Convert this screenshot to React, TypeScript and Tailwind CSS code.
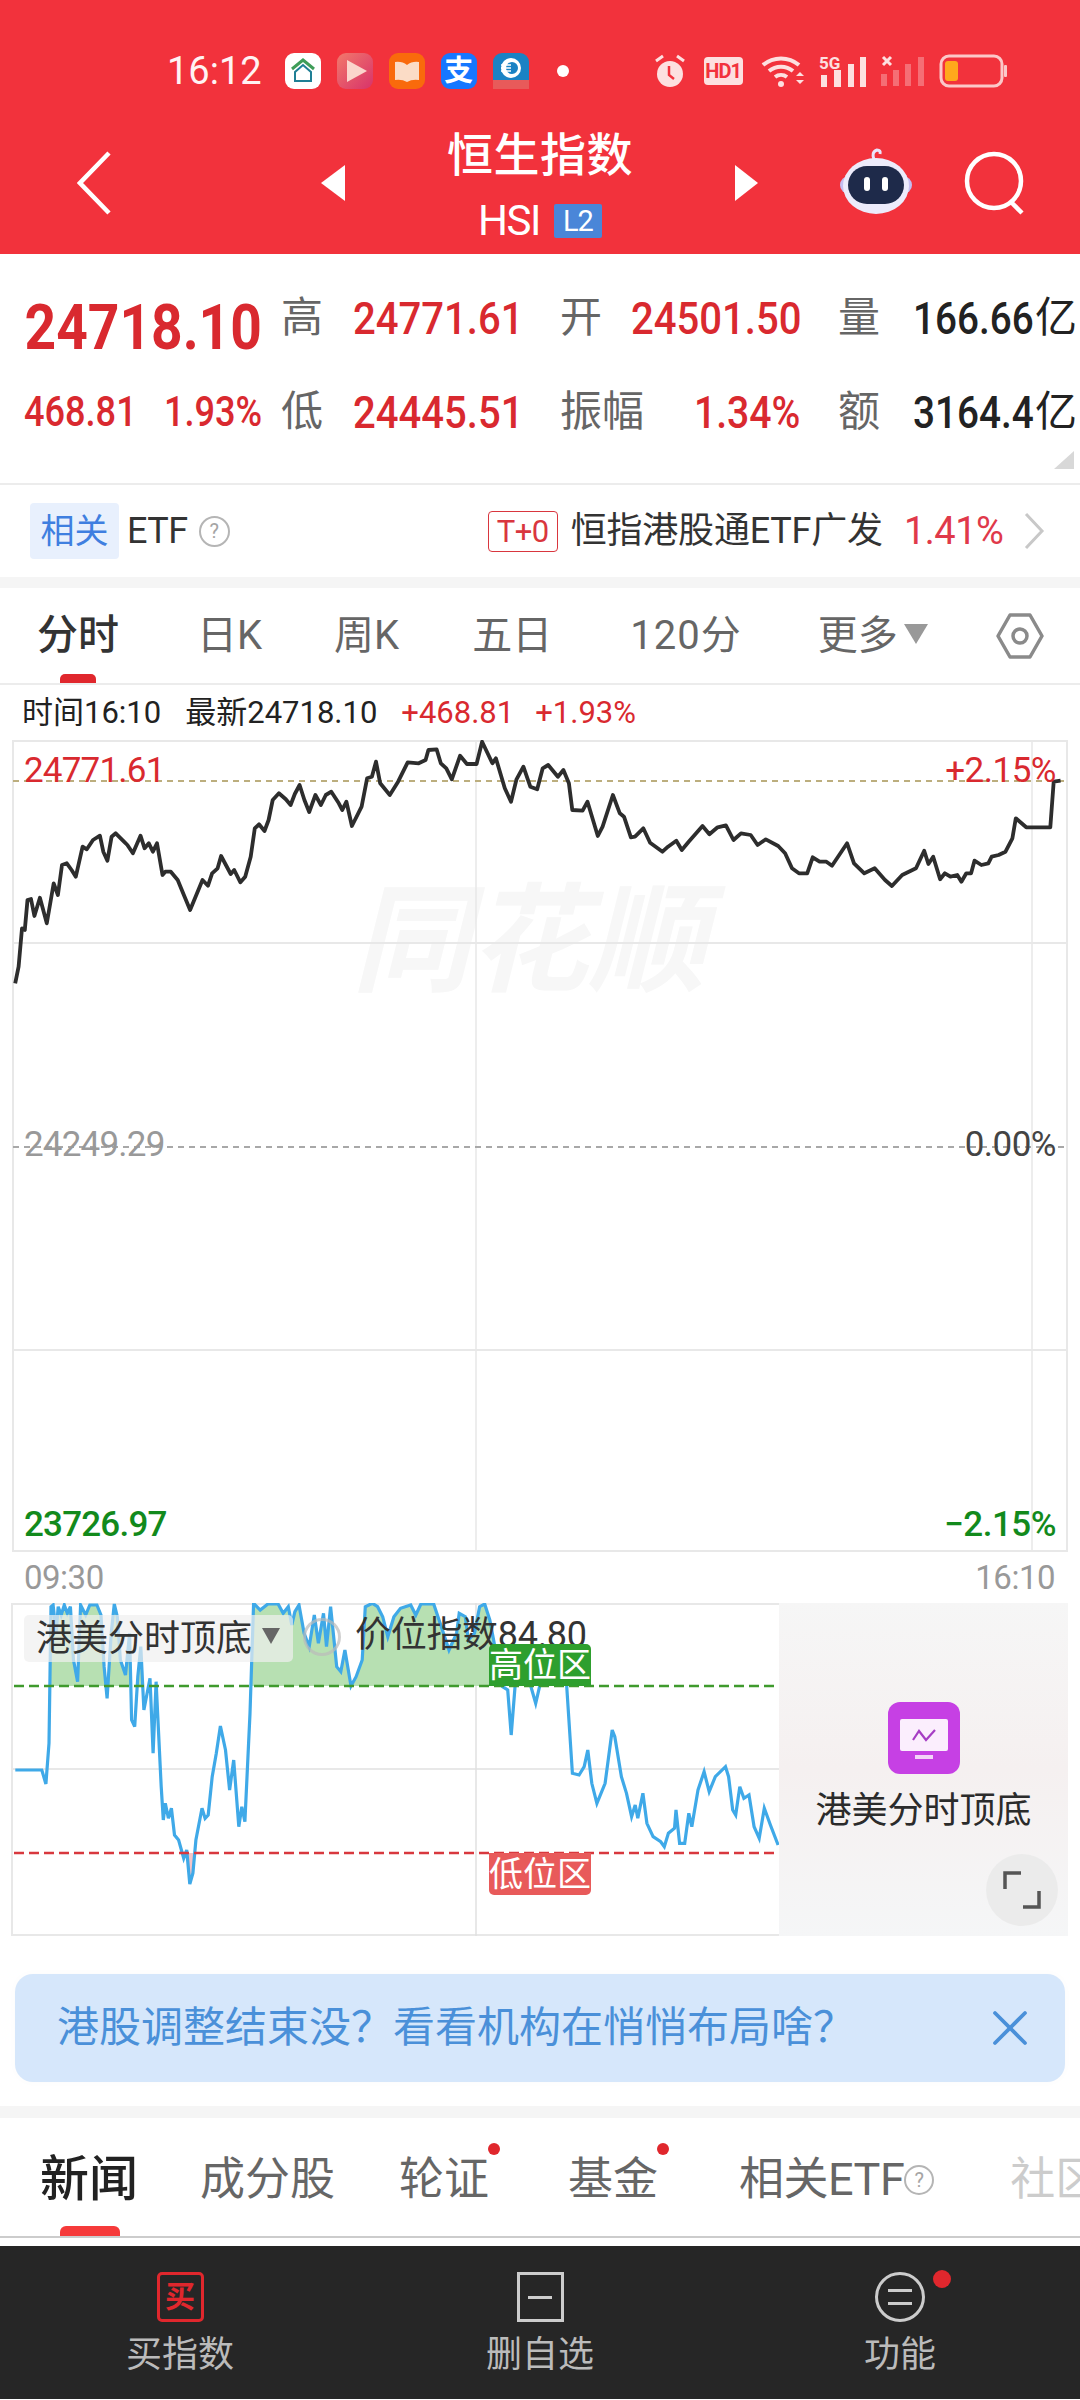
import { X } from "lucide-react"

const priceLine =
  "22,790 27,740 32,625 36,630 40,540 45,537 50,588 58,533 68,610 78,490 84,525 90,435 97,430 104,450 110,470 120,380 126,388 135,360 145,347 150,395 156,422 162,350 168,340 180,365 185,375 193,400 204,347 210,385 216,370 222,395 228,370 236,465 240,455 248,455 258,480 268,530 276,570 285,525 294,480 302,497 308,460 316,445 321,408 328,435 335,462 340,450 349,487 356,470 364,410 370,325 376,313 384,333 390,300 396,240 405,220 415,238 422,255 428,222 435,195 442,240 449,276 458,225 466,255 473,225 481,215 492,250 497,270 503,245 511,318 525,260 533,175 540,170 546,125 552,190 566,225 578,185 584,160 592,127 608,130 618,120 622,90 634,88 640,130 648,145 656,178 668,107 678,132 692,132 700,65 715,130 720,115 733,205 742,245 750,178 760,140 770,200 780,208 788,145 796,135 810,170 818,150 826,190 831,270 846,272 853,245 868,348 875,320 890,225 900,280 906,290 916,352 922,350 934,325 944,368 962,395 970,380 982,362 990,390 1000,365 1020,318 1030,343 1042,322 1054,316 1065,360 1076,340 1090,345 1100,375 1112,358 1130,378 1140,400 1150,445 1160,460 1172,460 1180,412 1190,425 1200,425 1208,437 1230,370 1240,430 1255,460 1270,445 1285,480 1295,498 1310,465 1330,445 1342,392 1348,432 1355,410 1365,478 1372,460 1380,470 1390,465 1396,485 1403,460 1410,460 1415,422 1425,435 1435,430 1440,410 1450,405 1460,395 1470,355 1475,295 1490,322 1525,322 1530,185 1540,182"

const indicatorLine =
  "30,810 82,810 90,852 96,730 100,320 104,315 110,400 114,320 120,345 126,315 132,340 138,320 144,480 152,545 158,315 168,345 176,315 190,315 198,345 204,500 210,595 218,400 224,312 230,350 236,480 246,525 254,400 258,660 264,680 270,530 276,440 282,630 294,535 300,760 306,545 316,860 320,960 324,910 330,955 336,925 342,1005 350,1020 360,1075 366,1050 372,1152 378,1120 384,1020 396,925 402,955 408,945 416,830 424,760 432,678 442,750 450,870 458,780 468,980 474,920 480,965 490,640 497,310 510,330 525,312 545,312 555,340 565,320 572,375 578,335 586,315 596,400 606,440 616,345 624,430 634,340 640,440 648,320 660,500 668,515 676,450 688,558 698,530 710,480 716,320 730,310 740,320 750,350 760,410 772,350 785,325 805,315 815,345 825,312 850,312 865,380 880,450 895,400 900,340 912,350 918,420 930,400 940,320 950,312 960,360 975,480 985,560 995,570 1002,705 1010,550 1020,480 1035,530 1050,610 1065,510 1085,470 1100,500 1110,540 1122,820 1135,825 1145,800 1152,750 1160,850 1170,910 1186,850 1200,690 1205,710 1218,830 1228,880 1238,950 1245,915 1250,955 1260,880 1268,970 1280,1010 1295,1025 1302,1040 1310,1000 1322,985 1325,930 1332,1030 1342,1030 1350,940 1356,980 1368,870 1380,815 1390,875 1402,830 1422,800 1428,830 1436,930 1442,945 1450,860 1458,895 1468,885 1478,980 1488,1015 1498,925 1510,975 1525,1035"

// points were read off the crops, so rescale into each chart's own box
function scalePoints(raw: string, sx: number, sy: number, oy: number) {
  return raw
    .split(" ")
    .map((p) => {
      const [x, y] = p.split(",").map(Number)
      return `${(x / sx).toFixed(1)},${(y / sy + oy).toFixed(1)}`
    })
    .join(" ")
}

function HelpDot({ className }: { className: string }) {
  return (
    <span className={`flex shrink-0 items-center justify-center rounded-full border-2 border-[#b5b5b5] text-[#a5a5a5] ${className}`}>?</span>
  )
}

function StatusIcons() {
  return (
    <div className="flex items-center">
      <svg width="34" height="36" viewBox="0 0 34 36" className="ml-[84px]">
        <circle cx="17" cy="21" r="13" fill="#fde0e0" />
        <path d="M16 13v9l5 4" stroke="#f2323c" strokeWidth="2.5" fill="none" />
        <path d="M3 8l7-5M31 8l-7-5" stroke="#fde0e0" strokeWidth="3" />
      </svg>
      <span className="ml-[17px] flex h-[28px] w-[39px] items-center justify-center rounded-[4px] bg-[#fde0e0] text-[20px] font-bold leading-none tracking-[-1px] text-[#f2323c]">HD1</span>
      <svg width="46" height="34" viewBox="0 0 46 34" className="ml-[18px]">
        <path d="M2 11a28 28 0 0 1 36 0M8 17a19 19 0 0 1 24 0M14 23a10 10 0 0 1 12 0" stroke="#fde0e0" strokeWidth="4" fill="none" />
        <circle cx="20" cy="30" r="3" fill="#fde0e0" />
        <path d="M35 22l4-4 4 4zM35 26l4 4 4-4z" fill="#fde0e0" />
      </svg>
      <svg width="48" height="34" viewBox="0 0 48 34" className="ml-[12px] overflow-visible">
        <text x="0" y="15" fill="#fde0e0" fontSize="17" fontWeight="700" fontFamily="Roboto">5G</text>
        <path d="M2 21h6v12H2zM15 16h7v17h-7zM29 10h6v23h-6zM41 3h6v30h-6z" fill="#fde0e0" />
      </svg>
      <svg width="44" height="32" viewBox="0 0 44 32" className="ml-[14px]">
        <path d="M2 2l8 8M10 2l-8 8" stroke="#fde0e0" strokeWidth="3" />
        <path d="M0 19h6v12H0zM12 15h6v16h-6zM24 9h6v22h-6zM37 2h6v29h-6z" fill="#fde0e0" opacity="0.35" />
      </svg>
      <svg width="68" height="34" viewBox="0 0 68 34" className="ml-[14px]">
        <rect x="2" y="2" width="61" height="30" rx="8" fill="none" stroke="#fbc8c8" strokeWidth="3" />
        <rect x="6" y="7" width="13" height="20" rx="3" fill="#ffa81c" />
        <rect x="65" y="11" width="3" height="12" rx="1" fill="#fbc8c8" />
      </svg>
    </div>
  )
}

function AppIcons() {
  return (
    <div className="ml-[23px] flex items-center gap-[16px]">
      <svg width="36" height="36" viewBox="0 0 36 36">
        <rect width="36" height="36" rx="9" fill="#fff" />
        <path d="M7 16l11-9 11 9" stroke="#3f9d58" strokeWidth="3" fill="none" />
        <path d="M10 19v9h16v-9l-8-7z" stroke="#1f7f95" strokeWidth="2" fill="none" />
      </svg>
      <svg width="36" height="36" viewBox="0 0 36 36">
        <defs>
          <linearGradient id="playBg" x1="0" y1="0" x2="1" y2="1">
            <stop offset="0" stopColor="#f2796b" />
            <stop offset="1" stopColor="#d8326a" />
          </linearGradient>
        </defs>
        <rect width="36" height="36" rx="9" fill="url(#playBg)" />
        <path d="M10 7l20 11-20 11z" fill="#fbd5cc" />
      </svg>
      <svg width="36" height="36" viewBox="0 0 36 36">
        <rect width="36" height="36" rx="9" fill="#f96a0c" />
        <path d="M6 9q7-1 12 3q5-4 12-3v18q-7-1-12 2q-5-3-12-2z" fill="#fbdcc6" />
      </svg>
      <span className="flex h-[36px] w-[36px] items-center justify-center rounded-[9px] bg-[#1677ff] text-[29px] font-bold leading-none text-white">支</span>
      <svg width="36" height="36" viewBox="0 0 36 36">
        <rect width="36" height="36" rx="9" fill="#1a82c4" />
        <circle cx="18" cy="15" r="10" fill="#fff" />
        <circle cx="19" cy="15" r="6" fill="#1a82c4" />
        <path d="M8 12h10M8 15h10M8 18h10" stroke="#fff" strokeWidth="1.5" />
        <rect y="27" width="36" height="9" fill="#e85a5a" />
      </svg>
      <span className="ml-[12px] h-[12px] w-[12px] rounded-full bg-white" />
    </div>
  )
}

function Header() {
  return (
    <header className="h-[254px] bg-[#f2323c] pt-[53px] text-white">
      <div className="flex h-[36px] items-center pl-[167px]">
        <span className="text-[38px] leading-none text-[#fff3f3]">16:12</span>
        <AppIcons />
        <StatusIcons />
      </div>
      <div className="mt-[41px] flex h-[110px] items-center pl-[77px]">
        <svg width="34" height="64" viewBox="0 0 34 64" className="mt-[-4px]">
          <path d="M32 2L3 32l29 30" fill="none" stroke="#fff" strokeWidth="4.5" />
        </svg>
        <svg width="24" height="36" viewBox="0 0 24 36" className="ml-[210px] mt-[-4px]">
          <path d="M24 0v36L0 18z" fill="#fff" />
        </svg>
        <div className="flex w-[390px] flex-col items-center">
          <span className="text-[46px] font-medium leading-[46px] tracking-[0.5px]">恒生指数</span>
          <div className="mt-[26px] flex items-center">
            <span className="text-[42px] leading-[34px] tracking-[-1.5px]">HSI</span>
            <span className="ml-[14px] flex h-[34px] w-[48px] items-center justify-center rounded-[2px] bg-[#4a86d8] text-[29px] leading-none tracking-[-1px]">L2</span>
          </div>
        </div>
        <svg width="23" height="36" viewBox="0 0 23 36" className="mt-[-4px]">
          <path d="M0 0v36l23-18z" fill="#fff" />
        </svg>
        <svg width="72" height="68" viewBox="0 0 72 68" className="ml-[82px] mt-[-10px]">
          <path d="M34 14q-3-8 3-10q4 0 3 4" fill="none" stroke="#e9e4fb" strokeWidth="3" />
          <rect x="0" y="30" width="72" height="18" rx="9" fill="#c4bdf0" />
          <ellipse cx="36" cy="40" rx="33" ry="28" fill="#ecebfb" />
          <rect x="8" y="20" width="56" height="38" rx="19" fill="#1e2a4a" />
          <rect x="24" y="31" width="6" height="14" rx="3" fill="#fff" />
          <rect x="42" y="31" width="6" height="14" rx="3" fill="#fff" />
        </svg>
        <svg width="62" height="64" viewBox="0 0 62 64" className="ml-[52px] mt-[-4px]">
          <ellipse cx="30" cy="30" rx="27" ry="27" fill="none" stroke="#fff" strokeWidth="4.5" />
          <path d="M47 51l11 11" stroke="#fff" strokeWidth="4.5" />
        </svg>
      </div>
    </header>
  )
}

function Stats() {
  const label = "text-[42px] leading-none text-[#666]"
  const red = "ml-[-1px] inline-block origin-left scale-x-[0.89] text-[45px] font-medium leading-none text-[#d9292f]"
  const dark = "inline-block shrink-0 origin-left scale-x-[0.86] text-[45px] font-medium leading-none text-[#222]"
  const row = "grid grid-cols-[281px_73px_206px_72px_206px_75px_167px] grid-rows-[46px] items-center whitespace-nowrap"
  return (
    <section className="relative h-[231px] border-b-2 border-[#ececec] pt-[41px]">
      <div className={row}>
        <span className="mt-[18px] inline-block origin-left scale-x-[0.875] pl-[28px] text-[63px] font-bold leading-none text-[#d9292f]">24718.10</span>
        <span className={label}>高</span>
        <span className={red}>24771.61</span>
        <span className={label}>开</span>
        <span className={red}>24501.50</span>
        <span className={label}>量</span>
        <span className="flex items-center">
          <span className={`${dark} w-[122px]`}>166.66</span>
          <span className="text-[42px] leading-none text-[#222]">亿</span>
        </span>
      </div>
      <div className={`${row} mt-[48px]`}>
        <span className="flex pl-[24px] text-[42px] font-medium leading-none text-[#d9292f]">
          <span className="w-[140px] origin-left scale-x-[0.86]">468.81</span>
          <span className="origin-left scale-x-[0.86]">1.93%</span>
        </span>
        <span className={label}>低</span>
        <span className={red}>24445.51</span>
        <span className="col-span-2 flex items-center justify-between pr-[38px]">
          <span className={label}>振幅</span>
          <span className="inline-block origin-right scale-x-[0.87] text-[45px] font-medium leading-none text-[#d9292f]">1.34%</span>
        </span>
        <span className={label}>额</span>
        <span className="flex items-center">
          <span className={`${dark} w-[122px]`}>3164.4</span>
          <span className="text-[42px] leading-none text-[#222]">亿</span>
        </span>
      </div>
      <svg width="20" height="18" viewBox="0 0 20 18" className="absolute bottom-[14px] right-[6px]">
        <path d="M20 0v18H0z" fill="#d8d8d8" />
      </svg>
    </section>
  )
}

function EtfRow() {
  return (
    <section className="flex h-[103px] items-center whitespace-nowrap border-b-[11px] border-[#f5f5f5] pl-[30px]">
      <span className="flex h-[56px] w-[89px] items-center justify-center rounded-[4px] bg-[#e8f0fd] text-[34px] leading-none text-[#3f7fe0]">相关</span>
      <span className="ml-[8px] text-[36px] leading-none tracking-[-0.5px] text-[#333]">ETF</span>
      <HelpDot className="ml-[11px] h-[31px] w-[31px] text-[20px] leading-none" />
      <span className="ml-[258px] flex h-[41px] w-[70px] items-center justify-center rounded-[4px] border border-[#d9363e] text-[31px] leading-none tracking-[-0.5px] text-[#d9363e]">T+0</span>
      <span className="ml-[13px] text-[36px] leading-none tracking-[-0.2px] text-[#333]">恒指港股通ETF广发</span>
      <span className="ml-[21px] text-[38px] leading-none tracking-[-0.5px] text-[#e0394a]">1.41%</span>
      <svg width="22" height="38" viewBox="0 0 22 38" className="ml-[20px]">
        <path d="M3 2l16 17L3 36" fill="none" stroke="#c8c8c8" strokeWidth="3" />
      </svg>
    </section>
  )
}

function PeriodTabs() {
  const tab = "text-[40px] leading-none text-[#666]"
  return (
    <section className="relative flex h-[97px] items-center whitespace-nowrap border-b-2 border-[#ececec] pl-[37px]">
      <span className="text-[41px] font-medium leading-none text-[#333]">分时</span>
      <span className={`${tab} ml-[78px]`}>日K</span>
      <span className={`${tab} ml-[72px]`}>周K</span>
      <span className={`${tab} ml-[73px]`}>五日</span>
      <span className={`${tab} ml-[78px] tracking-[1px]`}>120分</span>
      <span className={`${tab} ml-[76px]`}>更多</span>
      <svg width="24" height="20" viewBox="0 0 24 20" className="ml-[6px] mt-[-4px]">
        <path d="M0 0h24L12 20z" fill="#999" />
      </svg>
      <svg width="48" height="48" viewBox="0 0 48 48" className="ml-[68px]">
        <path d="M14 3h20l12 21-12 21H14L2 24z" fill="none" stroke="#8a8a8a" strokeWidth="3.5" strokeLinejoin="round" />
        <circle cx="24" cy="24" r="7" fill="none" stroke="#8a8a8a" strokeWidth="3.5" />
      </svg>
      <span className="absolute bottom-0 left-[60px] h-[9px] w-[36px] rounded-t-[5px] bg-[#e0272d]" />
    </section>
  )
}

function InfoRow() {
  return (
    <div className="flex h-[55px] items-center whitespace-nowrap pl-[22px] text-[31px] leading-none text-[#222]">
      <span>时间16:10</span>
      <span className="ml-[24px]">最新24718.10</span>
      <span className="ml-[24px] text-[#d9292f]">+468.81</span>
      <span className="ml-[21px] text-[#d9292f]">+1.93%</span>
    </div>
  )
}

function PriceChart() {
  const pts = scalePoints(priceLine, 1.452, 3, -20)
  return (
    <section className="relative h-[812px] overflow-hidden whitespace-nowrap">
      <span className="absolute left-[352px] top-[143px] text-[118px] font-bold italic leading-none text-[#f7f7f7]">同花顺</span>
      <svg className="absolute inset-0" width="1080" height="812" viewBox="0 0 1080 812">
        <g stroke="#e8e8e8" strokeWidth="2" fill="none">
          <path d="M13 1h1054V811H13z" />
          <path d="M13 203h1054M13 610h1054" />
        </g>
        <path d="M476 0v812M1032 0v812" stroke="#e8e8e8" strokeWidth="1.5" />
        <path d="M13 41h1054" stroke="#bcae7e" strokeWidth="2" strokeDasharray="6 5" />
        <path d="M13 407h1054" stroke="#a8a8a8" strokeWidth="2" strokeDasharray="6 5" />
        <polyline points={pts} fill="none" stroke="#2d2d2d" strokeWidth="3.8" strokeLinejoin="round" />
      </svg>
      <span className="absolute left-[24px] top-[13px] text-[35px] leading-none tracking-[-0.8px] text-[#d9292f]">24771.61</span>
      <span className="absolute right-[24px] top-[13px] text-[35px] leading-none tracking-[-0.5px] text-[#d9292f]">+2.15%</span>
      <span className="absolute left-[24px] top-[387px] text-[35px] leading-none tracking-[-0.8px] text-[#999]">24249.29</span>
      <span className="absolute right-[24px] top-[387px] text-[35px] leading-none tracking-[-0.5px] text-[#444]">0.00%</span>
      <span className="absolute bottom-[10px] left-[24px] text-[35px] font-medium leading-none tracking-[-0.8px] text-[#128a1c]">23726.97</span>
      <span className="absolute bottom-[10px] right-[24px] text-[35px] font-medium leading-none tracking-[-0.5px] text-[#128a1c]">−2.15%</span>
    </section>
  )
}

function IndicatorChart() {
  const pts = scalePoints(indicatorLine, 1.96, 3, -103)
  return (
    <section className="relative mb-[38px] ml-[12px] flex h-[333px] w-[1056px] whitespace-nowrap">
      <div className="relative w-[767px]">
        <svg className="absolute left-[-12px] top-0" width="780" height="333" viewBox="0 0 780 333">
          <defs>
            <clipPath id="aboveHigh">
              <rect x="0" y="0" width="780" height="83" />
            </clipPath>
            <clipPath id="belowLow">
              <rect x="0" y="250" width="780" height="83" />
            </clipPath>
            <clipPath id="panel">
              <rect x="0" y="0" width="780" height="333" />
            </clipPath>
          </defs>
          <path d="M12 1h768M12 166h768M12 332h768M12 0v333" stroke="#e8e8e8" strokeWidth="2" fill="none" />
          <path d="M476 0v333" stroke="#e0e0e0" strokeWidth="1.5" />
          <polygon points={`0,83 ${pts} 780,83`} fill="#b7e0b2" clipPath="url(#aboveHigh)" />
          <polygon points={`0,250 ${pts} 780,250`} fill="#f5c4c8" clipPath="url(#belowLow)" />
          <polyline points={pts} fill="none" stroke="#3fa9e8" strokeWidth="3.2" clipPath="url(#panel)" />
          <path d="M14 83h762" stroke="#3f9a2d" strokeWidth="2.5" strokeDasharray="10 5" />
          <path d="M14 250h762" stroke="#d8383e" strokeWidth="2.5" strokeDasharray="10 5" />
        </svg>
        <div className="absolute left-[12px] top-[12px] flex h-[47px] w-[269px] items-center rounded-[5px] bg-[#efefef]/70 pl-[12px]">
          <span className="text-[36px] leading-none text-[#333]">港美分时顶底</span>
          <svg width="18" height="16" viewBox="0 0 18 16" className="ml-[10px] mt-[-6px]">
            <path d="M0 0h18L9 16z" fill="#666" />
          </svg>
        </div>
        <span className="absolute left-[291px] top-[15px] h-[38px] w-[38px] rounded-full border-[3px] border-[#bbb]/70" />
        <span className="absolute left-[343px] top-[14px] text-[36px] leading-none tracking-[-0.3px] text-[#333]">价位指数84.80</span>
        <span className="absolute left-[477px] top-[41px] flex h-[42px] w-[102px] items-center justify-center rounded-t-[5px] bg-[#2e9f2e] text-[34px] leading-none text-white">高位区</span>
        <span className="absolute left-[477px] top-[250px] flex h-[42px] w-[102px] items-center justify-center rounded-b-[5px] bg-[#e85a5a] text-[34px] leading-none text-white">低位区</span>
      </div>
      <div className="relative flex w-[289px] flex-col items-center bg-gradient-to-b from-[#f6f6f6] via-[#f5f0f0] to-[#f5f6f7] pt-[99px]">
        <svg width="72" height="72" viewBox="0 0 72 72">
          <rect width="72" height="72" rx="12" fill="#c640e4" />
          <rect x="12" y="17" width="48" height="32" rx="2" fill="#fbeefd" />
          <rect x="27" y="53" width="18" height="4" fill="#f3d4f8" />
          <path d="M25 38l6-9 7 9 9-10" fill="none" stroke="#a63ec4" strokeWidth="2.2" />
        </svg>
        <span className="mt-[19px] text-[36px] leading-none text-[#2b2b2b]">港美分时顶底</span>
        <span className="absolute bottom-[10px] right-[10px] flex h-[72px] w-[72px] items-center justify-center rounded-full bg-[#ebebeb]">
          <svg width="38" height="38" viewBox="0 0 38 38">
            <path d="M18 2H2v16M36 20v16H20" fill="none" stroke="#555" strokeWidth="3.5" />
          </svg>
        </span>
      </div>
    </section>
  )
}

function Banner() {
  return (
    <div className="mx-[15px] flex h-[108px] items-center rounded-[18px] bg-[#d6e7fb] pl-[42px] pr-[25px] shadow-[0_0_10px_rgba(0,0,0,0.02)]">
      <span className="flex-1 whitespace-nowrap text-[42px] leading-none text-[#4a90d9]">{"港股调整结束没\uFF1F看看机构在悄悄布局啥\uFF1F"}</span>
      <X className="h-[60px] w-[60px] text-[#4a90d9]" strokeWidth={1.5} />
    </div>
  )
}

function NewsTabs() {
  const tab = "text-[45px] leading-none text-[#666]"
  return (
    <section className="relative mt-[24px] flex h-[132px] items-center overflow-hidden whitespace-nowrap border-t-[12px] border-b-2 border-t-[#f5f5f5] border-b-[#ccc] pl-[40px] pt-[5px]">
      <span className="text-[49px] font-medium leading-none text-[#222]">新闻</span>
      <span className={`${tab} ml-[62px]`}>成分股</span>
      <span className={`${tab} relative ml-[64px]`}>
        轮证
        <span className="absolute right-[-11px] top-[-14px] h-[12px] w-[12px] rounded-full bg-[#e0272d]" />
      </span>
      <span className={`${tab} relative ml-[79px]`}>
        基金
        <span className="absolute right-[-11px] top-[-14px] h-[12px] w-[12px] rounded-full bg-[#e0272d]" />
      </span>
      <span className={`${tab} ml-[81px] tracking-[-0.5px]`}>相关ETF</span>
      <HelpDot className="h-[30px] w-[30px] text-[20px] leading-none" />
      <span className={`${tab} ml-[76px] text-[#ccc]`}>社区</span>
      <span className="absolute bottom-0 left-[60px] h-[10px] w-[60px] rounded-t-[6px] bg-[#f63a3a]" />
    </section>
  )
}

function BottomNav() {
  const label = "mt-[15px] text-[36px] leading-none text-[#bbb]"
  return (
    <nav className="mt-[8px] grid h-[153px] grid-cols-3 whitespace-nowrap bg-[#262626] pt-[26px]">
      <div className="flex flex-col items-center">
        <span className="flex h-[50px] w-[47px] items-center justify-center rounded-[5px] border-[3px] border-[#e0272d] text-[30px] font-bold leading-none text-[#e0272d]">买</span>
        <span className={label}>买指数</span>
      </div>
      <div className="flex flex-col items-center">
        <span className="flex h-[50px] w-[47px] items-center justify-center border-[3px] border-[#ccc]">
          <span className="h-[3px] w-[24px] bg-[#ccc]" />
        </span>
        <span className={label}>删自选</span>
      </div>
      <div className="relative flex flex-col items-center">
        <span className="flex h-[50px] w-[50px] flex-col items-center justify-center gap-[10px] rounded-full border-[3px] border-[#ccc]">
          <span className="h-[3px] w-[24px] bg-[#ccc]" />
          <span className="h-[3px] w-[24px] bg-[#ccc]" />
        </span>
        <span className={label}>功能</span>
        <span className="absolute left-[213px] top-[-2px] h-[18px] w-[18px] rounded-full bg-[#e0272d]" />
      </div>
    </nav>
  )
}

export default function App() {
  return (
    <div className="flex h-[2400px] w-[1080px] flex-col overflow-hidden bg-white [font-family:Roboto,'Noto_Sans_CJK_SC',sans-serif]">
      <Header />
      <Stats />
      <EtfRow />
      <PeriodTabs />
      <InfoRow />
      <PriceChart />
      <div className="flex h-[51px] items-center justify-between pl-[24px] pr-[25px] text-[33px] leading-none tracking-[-0.5px] text-[#999]">
        <span>09:30</span>
        <span>16:10</span>
      </div>
      <IndicatorChart />
      <Banner />
      <NewsTabs />
      <BottomNav />
    </div>
  )
}
